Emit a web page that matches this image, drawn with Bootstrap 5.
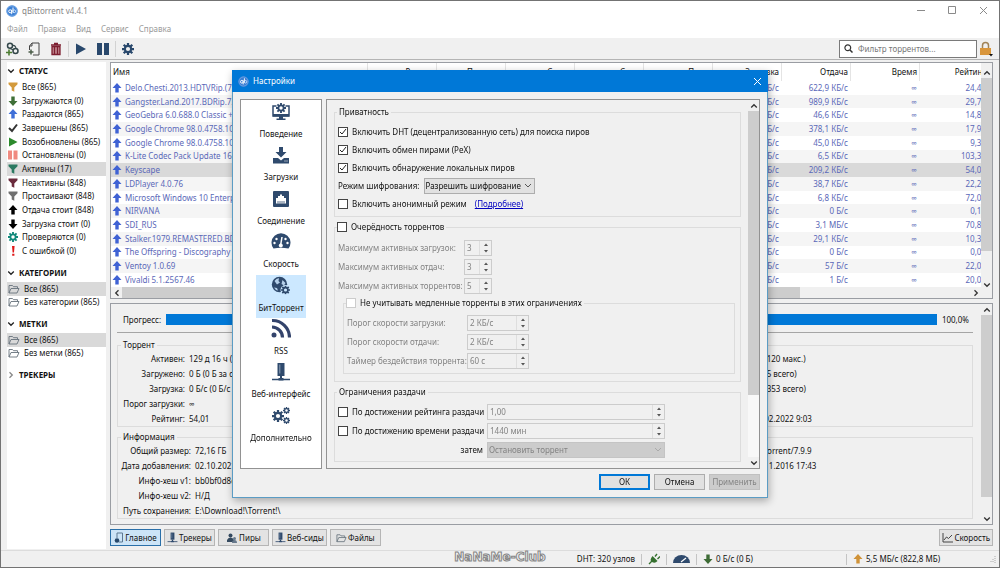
<!DOCTYPE html>
<html lang="ru">
<head>
<meta charset="utf-8">
<meta name="viewport" content="width=device-width, initial-scale=1">
<title>qBittorrent v4.4.1</title>
<link rel="stylesheet" href="https://cdn.jsdelivr.net/npm/bootstrap@5.3.0/dist/css/bootstrap.min.css">
<style>
:root{--face:#f0f0f0;--line:#adadad;--group:#dcdcdc;--navy:#2f4a6d;--sel:#d9d9d9}
body{font:8px/12px "Noto Sans","Open Sans",sans-serif;color:#111;background:var(--face);overflow:hidden}
svg{display:block;flex:none}
button,input,select{font:inherit;color:inherit;border-radius:0}
.window{height:100vh;border:1px solid #737373;position:relative}
.titlebar{height:19px;color:#858585;padding-left:5px}
.win-btn{width:31px;height:19px;border:0;background:none;padding:0;display:flex;align-items:center;justify-content:center;color:#8a8a8a}
.menubar{height:18px;padding-left:6px;gap:10px}
.menubar a{color:#9a9a9a;text-decoration:none}
.toolbar{height:22px;border-bottom:1px solid #b4b4b4;padding:0 4px 0 0}
.tool{border:0;background:none;padding:0;width:22px;height:20px;display:flex;align-items:center;justify-content:center}
.tool.lock{width:18px}
.tool-sep{width:1px;height:16px;background:#d2d2d2;margin:0 1px}
.search{width:138px;height:18px;border:1px solid #7a7a7a;background:#fff;padding:0 4px;gap:5px}
.search input{border:0;outline:0;padding:0;background:none;width:100%;min-width:0}
.search input::placeholder{color:#777;opacity:1}
.main{padding:2px 6px 4px 6px;min-height:0;flex:1 1 0}
.side{width:99px;background:#fff;margin-bottom:-3px}
.side h2{font:bold 8px/18px "Noto Sans","Open Sans",sans-serif;height:18px;margin:0;display:flex;align-items:center;gap:4px;padding-left:0}
.side section+section{margin-top:6px}
.side ul{margin:0;padding:0;list-style:none;display:flex;flex-direction:column;height:27px}
.side ul.statuses{height:178px}
.side li{flex:1 1 0;min-height:0}
.side li a{display:flex;align-items:center;height:100%;color:inherit;text-decoration:none;padding-left:1px;gap:4px;white-space:nowrap}
.side li.active{background:var(--sel)}
.content{margin-left:4px;min-width:0;gap:4px}
.panel{border:1px solid #9a9da3;min-width:0}
.torrents{height:237px;background:#fff}
.list-view{min-width:0;min-height:0;flex:1 1 0;overflow:hidden}
.grid{width:calc(100% + 8px);table-layout:fixed;border-collapse:separate;border-spacing:0;height:224px;white-space:nowrap}
.grid th{font-weight:normal;height:18px;padding:0 2px;border-right:1px solid #e4e4e4;text-align:right}
.grid th:first-child{text-align:left}
.grid td{padding:0 3px;text-align:right;color:#5a68b8;line-height:1;overflow:hidden}
.grid td:first-child{text-align:left;padding-left:1px}
.grid td:first-child span{display:flex;align-items:center;gap:3px}
.grid tbody tr:nth-child(even) td{background:#f5f5f5}
.grid tbody tr.current td{background:var(--sel)}
.grid .num{width:69px}
.grid .gap-col{width:auto}
.vbar{width:11px;background:var(--face);flex:none}
.hbar{height:11px;background:var(--face);flex:none}
.vbar button,.hbar button{width:11px;height:11px;border:0;padding:0;background:none;flex:none;display:flex;align-items:center;justify-content:center;color:#333}
.vbar i,.hbar i{display:block;background:#cdcdcd}
.props{min-height:0;flex:1 1 0}
.props-body{flex:1 1 0;min-width:0;overflow:hidden;padding:9px 8px 0 6px}
.progress-row{height:13px;gap:5px;padding-left:6px}
.done{height:11px;background:#0078d7;flex:1 1 0}
.rule{height:1px;background:#a5a5a5;margin:6px 0}
fieldset{border:1px solid var(--group);min-width:0}
legend{float:none;width:auto;font-size:8px;line-height:12px;margin:0 0 0 3px;padding:0 2px}
.facts{display:grid;grid-template-columns:67px minmax(0,1fr) 120px 219px;column-gap:4px;white-space:nowrap;line-height:15px;margin:0}
.facts.wide{grid-template-columns:73px minmax(0,1fr) 120px 219px}
.facts dt{font-weight:normal;text-align:right}
.facts dd{margin:0}
.tabs{height:17px;gap:3px}
.tab{height:17px;border:1px solid #b5b5b5;background:#e3e3e3;padding:0 2px;display:flex;align-items:center;justify-content:center;gap:1px;min-width:51px;white-space:nowrap}
.tab.active{background:#cce4f7;border-color:#2a6fa8}
.status{height:17px;border-top:1px solid #dcdcdc;padding-right:3px}
.status>div{display:flex;align-items:center;gap:3px;padding:0 6px}
.status>div+div{border-left:1px solid #c4c4c4;height:11px}
.traffic{width:150px}
.watermark{position:absolute;left:0;right:0;bottom:2px;text-align:center;font:bold 12px/16px "DejaVu Sans",sans-serif;color:#f4f4f4;-webkit-text-stroke:1px #858585;pointer-events:none}
.overlay{position:fixed;inset:0}
.dialog{width:536px;background:var(--face);border:1px solid #5b9cc4;border-top:0;box-shadow:1px 3px 8px rgba(0,0,0,.3)}
.dialog header{height:22px;background:#0078d7;color:#fff;margin:0 -1px;padding-left:6px}
.dialog-body{padding:7px 7px 0;height:377px;gap:4px}
.pages{width:82px;border:1px solid #929292;background:#fff;padding-top:1px;flex:none}
.pages nav{height:347px}
.pages a{flex:1 1 0;width:50px;display:flex;flex-direction:column;align-items:center;color:#111;text-decoration:none;white-space:nowrap;gap:5px}
.pages a.active{background:#cce8ff}
.options{border:1px solid #929292;min-width:0;flex:1 1 0}
.options-body{flex:1 1 0;min-width:0;overflow:hidden;padding:6px 7px 0 7px}
.options fieldset{padding:5px 4px 3px 3px;margin-bottom:4px}
.options legend{margin-left:-1px}
.options .form-line{display:flex;align-items:center;height:18px}
.options .queue .form-line,.options .limits .form-line{height:19px}
.options .queue{padding:5px 5px 7px 3px}
.options .queue fieldset{margin:2px 0 0 5px;padding:4px 4px 3px 3px}
.options .limits{padding:4px 4px 2px 3px;margin:0}
.options label{display:flex;align-items:center;gap:4px;white-space:nowrap}
.tick{appearance:none;width:10px;height:10px;border:1px solid #444;background:#fff;margin:0;flex:none}
.tick:checked{background:#fff url("data:image/svg+xml,%3Csvg xmlns='http://www.w3.org/2000/svg' viewBox='0 0 8 8'%3E%3Cpath d='M1 4l2 2 4-5' fill='none' stroke='%23222'/%3E%3C/svg%3E") center/8px no-repeat}
.tick:disabled{border-color:#ccc}
.combo{appearance:none;height:16px;border:1px solid #adadad;padding:0 12px 0 1px;line-height:12px;background:#e1e1e1 url("data:image/svg+xml,%3Csvg xmlns='http://www.w3.org/2000/svg' viewBox='0 0 8 8'%3E%3Cpath d='M1 2l3 3 3-3' fill='none' stroke='%23555'/%3E%3C/svg%3E") right 2px center/8px no-repeat}
.combo:disabled{background:#ccc url("data:image/svg+xml,%3Csvg xmlns='http://www.w3.org/2000/svg' viewBox='0 0 8 8'%3E%3Cpath d='M1 2l3 3 3-3' fill='none' stroke='%23aaa'/%3E%3C/svg%3E") right 2px center/8px no-repeat;border-color:#c4c4c4;color:#838383;opacity:1}
.off{color:#838383}
.spin{display:flex;border:1px solid #ccc;height:16px;color:#838383;width:28px}
.spin.mid{width:62px}
.spin.full,.combo.full{width:178px}
.spin input{flex:1 1 0;min-width:0;border:0;background:none;padding:0 2px;color:#838383}
.spin span{width:12px;border-left:1px solid #dedede;display:flex;align-items:center;justify-content:center;color:#555}
.w1{width:126px}.w2{width:120px}.w3{width:149px}
.dialog footer{padding:5px 7px 7px;gap:4px}
.push{width:51px;height:16px;border:1px solid #adadad;background:#e1e1e1;padding:0;line-height:12px}
.push.primary{border:2px solid #0078d7}
.push:disabled{background:#ccc;border-color:#c0c0c0;color:#838383}
</style>
</head>
<body>
<svg width="0" height="0" class="position-absolute" aria-hidden="true">
<symbol id="up" viewBox="0 0 10 10"><path d="M5 0l4.500 5H6.700v4.600H3.300V5H.5z" fill="currentColor"/></symbol>
<symbol id="down" viewBox="0 0 10 10"><path d="M5 10L.5 5h2.800V.4h3.400V5h2.800z" fill="currentColor"/></symbol>
<symbol id="funnel" viewBox="0 0 10 10"><path d="M.5.5h9v1.700L6.300 5.400v4.400L3.700 8.600V5.400L.5 2.200z" fill="currentColor"/></symbol>
<symbol id="chev-d" viewBox="0 0 8 8"><path d="M1.200 2.500L4 5.300l2.800-2.800" fill="none" stroke="currentColor" stroke-width="1.300"/></symbol>
<symbol id="chev-u" viewBox="0 0 8 8"><path d="M1.200 5.500L4 2.700l2.800 2.800" fill="none" stroke="currentColor" stroke-width="1.300"/></symbol>
<symbol id="chev-l" viewBox="0 0 8 8"><path d="M5.500 1.200L2.700 4l2.800 2.800" fill="none" stroke="currentColor" stroke-width="1.300"/></symbol>
<symbol id="chev-r" viewBox="0 0 8 8"><path d="M2.500 1.200L5.300 4 2.500 6.800" fill="none" stroke="currentColor" stroke-width="1.300"/></symbol>
<symbol id="folder" viewBox="0 0 12 10"><path d="M1 9V1.500h3.500l1 1.200h4V4.500M1 9l2-4.500h8L9 9z" fill="none" stroke="#66727c" stroke-width=".9"/></symbol>
<symbol id="logo" viewBox="0 0 12 12"><circle cx="6" cy="6" r="5.700" fill="#3b7fd4"/><circle cx="6" cy="6" r="5" fill="none" stroke="#8fbcf0" stroke-width=".6"/><circle cx="4.200" cy="6.300" r="1.500" fill="none" stroke="#fff"/><path d="M5.700 4.800v4.400M7 2.500v5" stroke="#fff"/><circle cx="8.200" cy="6.300" r="1.400" fill="none" stroke="#cfe3fa"/></symbol>
<symbol id="gear" viewBox="0 0 16 16"><path d="M8 0v16M0 8h16M2.300 2.300l11.400 11.400M13.700 2.300L2.300 13.700" stroke="currentColor" stroke-width="3"/><circle cx="8" cy="8" r="5.600" fill="currentColor"/><circle cx="8" cy="8" r="2.800" fill="var(--hole,#f0f0f0)"/></symbol>
<symbol id="spinner" viewBox="0 0 6 12"><path d="M3 1.500L5 4H1zM3 10.500L5 8H1z" fill="currentColor"/></symbol>
<symbol id="server" viewBox="0 0 20 20"><path d="M6.500 1h7v13h-7z" fill="#2f4a6d"/><path d="M8.800 2.500v9" stroke="#8da0b8" stroke-width="1"/><path d="M9 14h2v3H9z" fill="#2f4a6d"/><path d="M1 17.500h18" stroke="#2f4a6d" stroke-width="1.500"/><path d="M7.500 16h5v2.500h-5z" fill="#2f4a6d"/></symbol>
</svg>

<div class="window d-flex flex-column">
<div class="titlebar bg-white d-flex align-items-center">
<svg width="12" height="12"><use href="#logo"/></svg><span class="ms-1">qBittorrent v4.4.1</span>
<div class="ms-auto d-flex">
<button class="win-btn" aria-label="Свернуть"><svg width="9" height="9"><path d="M0 4.500h8" stroke="currentColor"/></svg></button>
<button class="win-btn" aria-label="Развернуть"><svg width="9" height="9"><path d="M.5.5h7v7h-7z" fill="none" stroke="currentColor"/></svg></button>
<button class="win-btn" aria-label="Закрыть"><svg width="9" height="9"><path d="M1 1l7 7M8 1L1 8" stroke="currentColor"/></svg></button>
</div>
</div>
<nav class="menubar bg-white d-flex align-items-center"><a href="#">Файл</a><a href="#">Правка</a><a href="#">Вид</a><a href="#">Сервис</a><a href="#">Справка</a></nav>
<div class="toolbar d-flex align-items-center">
<button class="tool" aria-label="Добавить ссылку"><svg width="14" height="14"><circle cx="5" cy="3.800" r="2.500" fill="none" stroke="#33474a" stroke-width="1.500"/><circle cx="10.500" cy="9" r="2.500" fill="none" stroke="#33474a" stroke-width="1.500"/><path d="M5 6.500l3.500 1.500M7.500 3.500q3-.5 3.500 3" fill="none" stroke="#33474a" stroke-width="1.200"/><path d="M4 7.500v6M1 10.500h6" stroke="#4d7d32" stroke-width="1.600"/></svg></button>
<button class="tool" aria-label="Добавить файл"><svg width="14" height="14"><path d="M5 1h7v12H6M5 1v3H2.500v4M5 1L2.500 4" fill="none" stroke="#444"/><path d="M4 7.500v5M1.500 10h5" stroke="#4a5c48" stroke-width="1.500"/></svg></button>
<button class="tool" aria-label="Удалить"><svg width="12" height="14"><path d="M1 3h10M4 1.500h4" stroke="#7d1f30" stroke-width="1.500"/><path d="M2 4.500h8v8H2z" fill="#b87982" stroke="#7d1f30" stroke-width="1.300"/><path d="M4.500 5v7M7.500 5v7" stroke="#7d1f30"/></svg></button>
<span class="tool-sep"></span>
<button class="tool" aria-label="Возобновить"><svg width="12" height="12"><path d="M1 .5l10 5.500L1 11.500z" fill="#29486c"/></svg></button>
<button class="tool" aria-label="Остановить"><svg width="12" height="12"><path d="M0 0h5v12H0zM7 0h5v12H7z" fill="#29486c"/></svg></button>
<span class="tool-sep"></span>
<button class="tool" aria-label="Настройки"><svg width="12" height="12" color="#29486c"><use href="#gear"/></svg></button>
<div class="search d-flex align-items-center ms-auto">
<svg width="9" height="9"><circle cx="3.800" cy="3.800" r="2.900" fill="none" stroke="#333" stroke-width="1.200"/><path d="M6 6l2.500 2.500" stroke="#333" stroke-width="1.500"/></svg>
<input type="text" placeholder="Фильтр торрентов..." aria-label="Фильтр торрентов">
</div>
<button class="tool lock" aria-label="Блокировка"><svg width="14" height="16"><path d="M3.500 8V4.500a3 3 0 0 1 6 0V8" fill="none" stroke="#a08358" stroke-width="1.500"/><path d="M1 7h11v7H1z" fill="#d9963c"/><path d="M10 13h4l-2 2.500z" fill="#111"/></svg></button>
</div>

<div class="main d-flex">
<aside class="side flex-shrink-0" id="filters"></aside>
<div class="content d-flex flex-column flex-grow-1">
<div class="panel torrents d-flex">
<div class="d-flex flex-column flex-grow-1 overflow-hidden">
<div class="list-view">
<table class="grid">
<colgroup><col class="gap-col"><col class="num"><col class="num"><col class="num"><col class="num"><col class="num"><col class="num"><col class="num"><col class="num"><col class="num"></colgroup>
<thead><tr><th>Имя</th><th>Размер</th><th>Прогресс</th><th>Статус</th><th>Сиды</th><th>Пиры</th><th>Загрузка</th><th>Отдача</th><th>Время</th><th>Рейтинг</th></tr></thead>
<tbody id="rows"></tbody>
</table>
</div>
<div class="hbar d-flex"><button aria-label="Влево"><svg width="8" height="8"><use href="#chev-l"/></svg></button><div class="flex-grow-1"><i class="h-100" style="width:80%"></i></div><button aria-label="Вправо"><svg width="8" height="8"><use href="#chev-r"/></svg></button></div>
</div>
<div class="vbar d-flex flex-column pt-1 pb-2"><button aria-label="Вверх"><svg width="8" height="8"><use href="#chev-u"/></svg></button><div class="flex-grow-1"><i style="height:86%"></i></div><button aria-label="Вниз"><svg width="8" height="8"><use href="#chev-d"/></svg></button></div>
</div>

<div class="panel props d-flex">
<div class="props-body">
<div class="progress-row d-flex align-items-center"><span>Прогресс:</span><div class="done"></div><span class="pe-1">100,0%</span></div>
<div class="rule"></div>
<fieldset><legend>Торрент</legend>
<dl class="facts">
<dt>Активен:</dt><dd>129 д 16 ч (раздаётся 129 д)</dd><dt>Соединения:</dt><dd>37 (120 макс.)</dd>
<dt>Загружено:</dt><dd>0 Б (0 Б за сеанс)</dd><dt>Сиды:</dt><dd>10 (5 всего)</dd>
<dt>Загрузка:</dt><dd>0 Б/с (0 Б/с средн.)</dd><dt>Пиры:</dt><dd>15 (353 всего)</dd>
<dt>Порог загрузки:</dt><dd>∞</dd><dt>Потеряно:</dt><dd>0 Б</dd>
<dt>Рейтинг:</dt><dd>54,01</dd><dt>Замечен целиком:</dt><dd>22.02.2022 9:03</dd>
</dl></fieldset>
<fieldset class="mt-1"><legend>Информация</legend>
<dl class="facts wide">
<dt>Общий размер:</dt><dd>72,16 ГБ</dd><dt>Создан в:</dt><dd>BitTorrent/7.9.9</dd>
<dt>Дата добавления:</dt><dd>02.10.2021 19:35</dd><dt>Создан:</dt><dd>11.11.2016 17:43</dd>
<dt>Инфо-хеш v1:</dt><dd>bb0bf0d8c41e</dd><dt></dt><dd></dd>
<dt>Инфо-хеш v2:</dt><dd>Н/Д</dd><dt></dt><dd></dd>
<dt>Путь сохранения:</dt><dd>E:\Download!\Torrent!\</dd>
</dl></fieldset>
</div>
<div class="vbar d-flex flex-column"><button aria-label="Вверх"><svg width="8" height="8"><use href="#chev-u"/></svg></button><div class="flex-grow-1"><i style="height:92%"></i></div><button aria-label="Вниз"><svg width="8" height="8"><use href="#chev-d"/></svg></button></div>
</div>

<div class="tabs d-flex">
<button class="tab active"><svg width="10" height="12"><path d="M3 1h5.500v9H5M3 1v5" fill="none" stroke="#5d7891"/><circle cx="3" cy="8.500" r="2.300" fill="#27486b"/></svg>Главное</button>
<button class="tab"><svg width="11" height="11"><use href="#server"/></svg>Трекеры</button>
<button class="tab"><svg width="12" height="12"><circle cx="4.500" cy="3.500" r="2" fill="#354a60"/><path d="M1 10V8q1-2.500 3.500-2.500T8 8v2z" fill="#354a60"/><circle cx="8.500" cy="6.500" r="1.500" fill="#67798c"/><path d="M6 11q0-3 2.500-3t2.500 3z" fill="#67798c"/></svg>Пиры</button>
<button class="tab"><svg width="11" height="11"><use href="#server"/></svg>Веб-сиды</button>
<button class="tab"><svg width="11" height="10"><use href="#folder"/></svg>Файлы</button>
<button class="tab ms-auto"><svg width="11" height="10"><path d="M1 0v9h10M2 7l2.500-3 2 1.500L10 2" fill="none" stroke="#444"/></svg>Скорость</button>
</div>
</div>
</div>

<div class="status d-flex align-items-center justify-content-end">
<div>DHT: 320 узлов</div>
<div><svg width="12" height="12"><path d="M1 11l3-3M7 3.500L9 1M9.500 6L12 3.500" stroke="#35702f" stroke-width="1.400"/><path d="M4.500 3l5 5q-2.500 3-5.500 1T4.500 3z" fill="#35702f"/></svg></div>
<div><svg width="17" height="10"><path d="M0 9a8.500 8 0 0 1 17 0z" fill="#2f4a6d"/><path d="M8 8l5-4" stroke="#fff" stroke-width="1.200"/></svg></div>
<div class="traffic"><svg width="10" height="10" color="#3d6b35"><use href="#down"/></svg>0 Б/с (0 Б)</div>
<div class="traffic pe-0"><svg width="10" height="10" color="#cf9238"><use href="#up"/></svg>5,5 МБ/с (822,8 МБ)<svg class="ms-auto" width="7" height="7"><path d="M6 0v7M4 3v4M2 5v2" stroke="#aaa" stroke-dasharray="1 1"/></svg></div>
</div>
<div class="watermark">NaNaMe-Club</div>
</div>

<div class="overlay d-flex align-items-center justify-content-center">
<div class="dialog" role="dialog" aria-label="Настройки">
<header class="d-flex align-items-center"><svg width="11" height="11"><use href="#logo"/></svg><span class="ms-1">Настройки</span><button class="tool text-white ms-auto" aria-label="Закрыть"><svg width="9" height="9"><path d="M1 1l7 7M8 1L1 8" stroke="currentColor"/></svg></button></header>
<div class="dialog-body d-flex">
<div class="pages">
<nav class="d-flex flex-column align-items-center">
<a href="#"><svg width="20" height="22" viewBox="0 0 20 22"><path d="M5.500 5H2v10h16V5h-3.500" fill="none" stroke="#2f4a6d" stroke-width="1.500"/><path d="M2 13h16v2.500H2zM8 15h4v2.500h2.500V19h-9v-1.500H8z" fill="#2f4a6d"/><svg x="5" y="2" width="10" height="10" style="color:#2f4a6d;--hole:#fff"><use href="#gear"/></svg></svg>Поведение</a>
<a href="#"><svg width="20" height="22" viewBox="0 0 20 22"><path d="M8 3h4v5h3.500L10 13.500 4.500 8H8zM2 14h5l3 2.500 3-2.500h5v5.500H2z" fill="#2f4a6d"/><path d="M13.500 17h1M15.500 17h1" stroke="#fff"/></svg>Загрузки</a>
<a href="#"><svg width="20" height="22" viewBox="0 0 20 22"><rect x="2" y="3" width="16" height="16" rx="1" fill="#2f4a6d"/><path d="M5 15.500V10h2V8h2V6.500h2V8h2v2h2v5.500z" fill="#fff"/><path d="M7 13v2.500M9 13v2.500M11 13v2.500M13 13v2.500" stroke="#2f4a6d" stroke-width=".8"/></svg>Соединение</a>
<a href="#"><svg width="20" height="22" viewBox="0 0 20 22"><path d="M2.500 17.500A9.500 9.500 0 1 1 17.500 17.500q-7.500-1.500-15 0z" fill="#2f4a6d"/><path d="M9.500 15L11 6" stroke="#fff" stroke-width="1.500"/><circle cx="9.800" cy="14.500" r="2" fill="#fff"/><g fill="#fff"><circle cx="3.500" cy="12" r="1.200"/><circle cx="5.500" cy="8" r="1.200"/><circle cx="14.500" cy="8" r="1.200"/><circle cx="16.500" cy="12" r="1.200"/></g></svg>Скорость</a>
<a href="#" class="active"><svg width="20" height="22" viewBox="0 0 20 22"><circle cx="8.500" cy="9.500" r="7.700" fill="#2f4a6d"/><path d="M3.500 6q2-3 4.500-2.800L7.500 6 9 7.500 6 9.500zM11.500 5l3 3-1.500 2.500-2.500-1.500zM3 12.500l3 .5 1 2.500-2-.5z" fill="#b5d0ea"/><circle cx="14.500" cy="15" r="5" fill="#cce8ff"/><svg x="10" y="10.500" width="9" height="9" style="color:#2f4a6d;--hole:#cce8ff"><use href="#gear"/></svg></svg>БитТоррент</a>
<a href="#"><svg width="20" height="22" viewBox="0 0 20 22"><circle cx="3" cy="17" r="2.500" fill="#33436b"/><path d="M1 9a10.500 10.500 0 0 1 10.500 10.500M1 2.500a17 17 0 0 1 17.500 17" fill="none" stroke="#33436b" stroke-width="3.200"/></svg>RSS</a>
<a href="#"><svg width="20" height="22" viewBox="0 0 20 20"><use href="#server" width="20" height="20"/></svg>Веб-интерфейс</a>
<a href="#"><svg width="20" height="22" viewBox="0 0 20 22" style="color:#2f4a6d;--hole:#fff"><svg x="1" y="5" width="12" height="12"><use href="#gear"/></svg><svg x="12" y="2" width="7" height="7"><use href="#gear"/></svg><svg x="12" y="12" width="7" height="7"><use href="#gear"/></svg></svg>Дополнительно</a>
</nav>
</div>
<div class="options d-flex">
<div class="options-body">
<fieldset><legend>Приватность</legend>
<div class="form-line"><label><input class="tick" type="checkbox" checked>Включить DHT (децентрализованную сеть) для поиска пиров</label></div>
<div class="form-line"><label><input class="tick" type="checkbox" checked>Включить обмен пирами (PeX)</label></div>
<div class="form-line"><label><input class="tick" type="checkbox" checked>Включить обнаружение локальных пиров</label></div>
<div class="form-line"><label for="enc" class="me-1">Режим шифрования:</label><select id="enc" class="combo"><option>Разрешить шифрование</option></select></div>
<div class="form-line"><label class="me-2"><input class="tick" type="checkbox">Включить анонимный режим</label><a href="#" style="color:#0000c0">(Подробнее)</a></div>
</fieldset>
<fieldset class="queue"><legend class="ps-0"><label><input class="tick" type="checkbox">Очерёдность торрентов</label></legend>
<div class="form-line off"><label for="q1" class="w1">Максимум активных загрузок:</label><div class="spin"><input id="q1" type="text" value="3" disabled><span><svg width="6" height="12"><use href="#spinner"/></svg></span></div></div>
<div class="form-line off"><label for="q2" class="w1">Максимум активных отдач:</label><div class="spin"><input id="q2" type="text" value="3" disabled><span><svg width="6" height="12"><use href="#spinner"/></svg></span></div></div>
<div class="form-line off"><label for="q3" class="w1">Максимум активных торрентов:</label><div class="spin"><input id="q3" type="text" value="5" disabled><span><svg width="6" height="12"><use href="#spinner"/></svg></span></div></div>
<fieldset><legend class="ps-0"><label><input class="tick" type="checkbox" disabled>Не учитывать медленные торренты в этих ограничениях</label></legend>
<div class="form-line off"><label for="s1" class="w2">Порог скорости загрузки:</label><div class="spin mid"><input id="s1" type="text" value="2 КБ/с" disabled><span><svg width="6" height="12"><use href="#spinner"/></svg></span></div></div>
<div class="form-line off"><label for="s2" class="w2">Порог скорости отдачи:</label><div class="spin mid"><input id="s2" type="text" value="2 КБ/с" disabled><span><svg width="6" height="12"><use href="#spinner"/></svg></span></div></div>
<div class="form-line off"><label for="s3" class="w2">Таймер бездействия торрента:</label><div class="spin mid"><input id="s3" type="text" value="60 с" disabled><span><svg width="6" height="12"><use href="#spinner"/></svg></span></div></div>
</fieldset>
</fieldset>
<fieldset class="limits"><legend>Ограничения раздачи</legend>
<div class="form-line"><label class="w3"><input class="tick" type="checkbox">По достижении рейтинга раздачи</label><div class="spin full"><input type="text" value="1,00" aria-label="Рейтинг" disabled><span><svg width="6" height="12"><use href="#spinner"/></svg></span></div></div>
<div class="form-line"><label class="w3"><input class="tick" type="checkbox">По достижению времени раздачи</label><div class="spin full"><input type="text" value="1440 мин" aria-label="Время" disabled><span><svg width="6" height="12"><use href="#spinner"/></svg></span></div></div>
<div class="form-line"><label for="then" class="w3 justify-content-end pe-1">затем</label><select id="then" class="combo full" disabled><option>Остановить торрент</option></select></div>
</fieldset>
</div>
<div class="vbar d-flex flex-column"><button aria-label="Вверх"><svg width="8" height="8"><use href="#chev-u"/></svg></button><div class="flex-grow-1 bg-white bg-opacity-50"><i style="height:82%"></i></div><button aria-label="Вниз"><svg width="8" height="8"><use href="#chev-d"/></svg></button></div>
</div>
</div>
<footer class="d-flex justify-content-end"><button class="push primary">ОК</button><button class="push">Отмена</button><button class="push" disabled>Применить</button></footer>
</div>
</div>

<script src="https://cdn.jsdelivr.net/npm/bootstrap@5.3.0/dist/js/bootstrap.bundle.min.js"></script>
<script>
const use = (id, color, w = 10, h = 10) => `<svg width="${w}" height="${h}" style="color:${color}"><use href="#${id}"/></svg>`;
const own = body => `<svg width="10" height="10">${body}</svg>`;
const statuses = [
  [use('funnel', '#d39a3c'), 'Все (865)'],
  [use('down', '#3f6f37'), 'Загружаются (0)'],
  [use('up', '#3f6fd8'), 'Раздаются (865)'],
  [own('<path d="M1 5l3 3 5-6.500" fill="none" stroke="#333" stroke-width="2"/>'), 'Завершены (865)'],
  [own('<path d="M1 .5l8.500 4.500L1 9.500z" fill="#2c8a2c"/>'), 'Возобновлены (865)'],
  [own('<path d="M0 .5h4v9H0zM5.500.5h4v9h-4z" fill="#f08a80"/>'), 'Остановлены (0)'],
  [use('funnel', '#2c7a62'), 'Активны (17)', true],
  [use('funnel', '#6b2b3d'), 'Неактивны (848)'],
  [use('funnel', '#707070'), 'Простаивают (848)'],
  [use('up', '#000'), 'Отдача стоит (848)'],
  [use('down', '#000'), 'Загрузка стоит (0)'],
  [use('gear', '#12897b;--hole:#fff'), 'Проверяются (0)'],
  [own('<path d="M4 0h2.600L6 6.500H4.600zM4.200 7.800h2.200v2H4.200z" fill="#e01818"/>'), 'С ошибкой (0)']
];
const folder = use('folder', '#555', 12, 10);
const section = (title, items, cls = '', open = true) =>
  `<section><h2>${use(open ? 'chev-d' : 'chev-r', open ? '#222' : '#888', 8, 8)}${title}</h2>` +
  (items.length ? `<ul class="${cls}">${items.map(([i, t, a]) => `<li class="${a ? 'active' : ''}"><a href="#">${i}${t}</a></li>`).join('')}</ul>` : '') + '</section>';
document.getElementById('filters').innerHTML =
  section('СТАТУС', statuses, 'statuses') +
  section('КАТЕГОРИИ', [[folder, 'Все (865)', true], [folder, 'Без категории (865)']]) +
  section('МЕТКИ', [[folder, 'Все (865)', true], [folder, 'Без метки (865)']]) +
  section('ТРЕКЕРЫ', [], '', false);

const torrents = [
  ['Delo.Chesti.2013.HDTVRip.(720p)', '622,9 КБ/с', '24,46'],
  ['Gangster.Land.2017.BDRip.720p', '989,9 КБ/с', '29,71'],
  ['GeoGebra 6.0.688.0 Classic + Portable', '46,6 КБ/с', '14,85'],
  ['Google Chrome 98.0.4758.102', '378,1 КБ/с', '17,92'],
  ['Google Chrome 98.0.4758.102', '45,0 КБ/с', '9,31'],
  ['K-Lite Codec Pack Update 16.8', '6,5 КБ/с', '103,35'],
  ['Keyscape', '209,2 КБ/с', '54,01'],
  ['LDPlayer 4.0.76', '38,7 КБ/с', '22,25'],
  ['Microsoft Windows 10 Enterprise', '6,8 КБ/с', '72,06'],
  ['NIRVANA', '0 Б/с', '0,11'],
  ['SDI_RUS', '3,1 МБ/с', '70,84'],
  ['Stalker.1979.REMASTERED.BDRip', '29,1 КБ/с', '10,35'],
  ['The Offspring - Discography (1989)', '0 Б/с', '0,00'],
  ['Ventoy 1.0.69', '57 Б/с', '22,06'],
  ['Vivaldi 5.1.2567.46', '1 Б/с', '20,04']
];
document.getElementById('rows').innerHTML = torrents.map(([n, s, r]) =>
  `<tr class="${n === 'Keyscape' ? 'current' : ''}"><td><span>${use('up', '#3f62d4')}${n}</span></td><td></td><td></td><td></td><td></td><td></td><td>0 КБ/с</td><td>${s}</td><td>∞</td><td>${r}</td></tr>`).join('');
</script>
</body>
</html>
